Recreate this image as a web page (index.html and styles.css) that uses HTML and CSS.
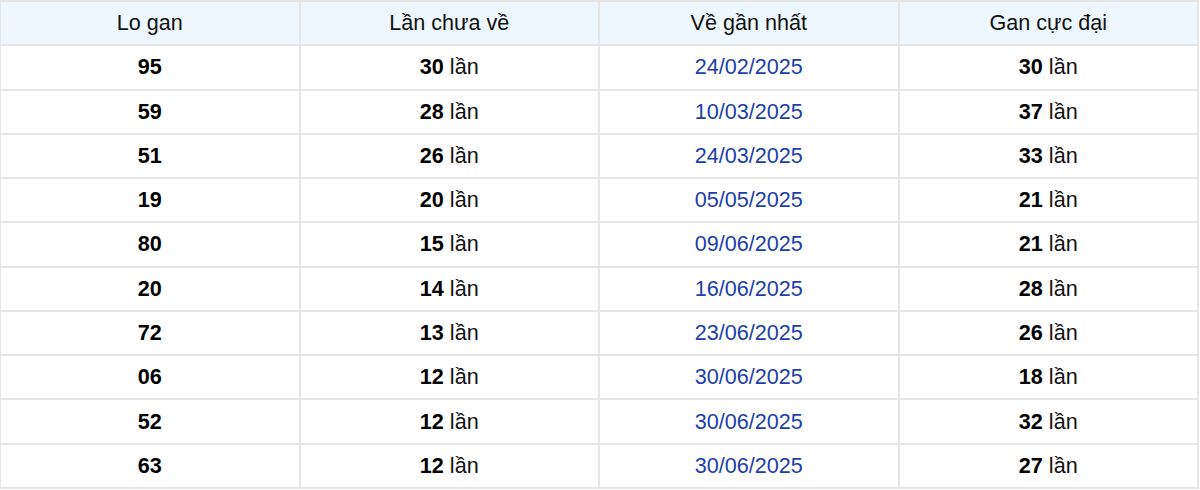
FILE: index.html
```html
<!DOCTYPE html>
<html lang="vi">
<head>
<meta charset="utf-8">
<title>Lo gan</title>
<link rel="stylesheet" href="styles.css">
</head>
<body>
<table class="gan-table">
  <thead>
    <tr><th>Lo gan</th><th>Lần chưa về</th><th>Về gần nhất</th><th>Gan cực đại</th></tr>
  </thead>
  <tbody>
    <tr><td><b>95</b></td><td><b>30</b> lần</td><td class="date">24/02/2025</td><td><b>30</b> lần</td></tr>
    <tr><td><b>59</b></td><td><b>28</b> lần</td><td class="date">10/03/2025</td><td><b>37</b> lần</td></tr>
    <tr><td><b>51</b></td><td><b>26</b> lần</td><td class="date">24/03/2025</td><td><b>33</b> lần</td></tr>
    <tr><td><b>19</b></td><td><b>20</b> lần</td><td class="date">05/05/2025</td><td><b>21</b> lần</td></tr>
    <tr><td><b>80</b></td><td><b>15</b> lần</td><td class="date">09/06/2025</td><td><b>21</b> lần</td></tr>
    <tr><td><b>20</b></td><td><b>14</b> lần</td><td class="date">16/06/2025</td><td><b>28</b> lần</td></tr>
    <tr><td><b>72</b></td><td><b>13</b> lần</td><td class="date">23/06/2025</td><td><b>26</b> lần</td></tr>
    <tr><td><b>06</b></td><td><b>12</b> lần</td><td class="date">30/06/2025</td><td><b>18</b> lần</td></tr>
    <tr><td><b>52</b></td><td><b>12</b> lần</td><td class="date">30/06/2025</td><td><b>32</b> lần</td></tr>
    <tr><td><b>63</b></td><td><b>12</b> lần</td><td class="date">30/06/2025</td><td><b>27</b> lần</td></tr>
  </tbody>
</table>
</body>
</html>
```
FILE: styles.css
```css
html, body {
  margin: 0;
  padding: 0;
  background: #ffffff;
}
body {
  font-family: "Liberation Sans", Arial, sans-serif;
  color: #111111;
  overflow: hidden;
}
.gan-table {
  width: 1200px;
  margin: 0 0 0 -1px;
  border-collapse: collapse;
  table-layout: fixed;
  font-size: 21.6px;
}
.gan-table th,
.gan-table td {
  border: 2px solid #e6e6e6;
  text-align: center;
  vertical-align: middle;
  padding: 0;
  height: 42.27px;
}
.gan-table th {
  font-weight: normal;
  background: #eef6fe;
  color: #111111;
}
.gan-table b { font-weight: bold; color: #000; }
.gan-table .date { color: #1c3eaa; }
```
